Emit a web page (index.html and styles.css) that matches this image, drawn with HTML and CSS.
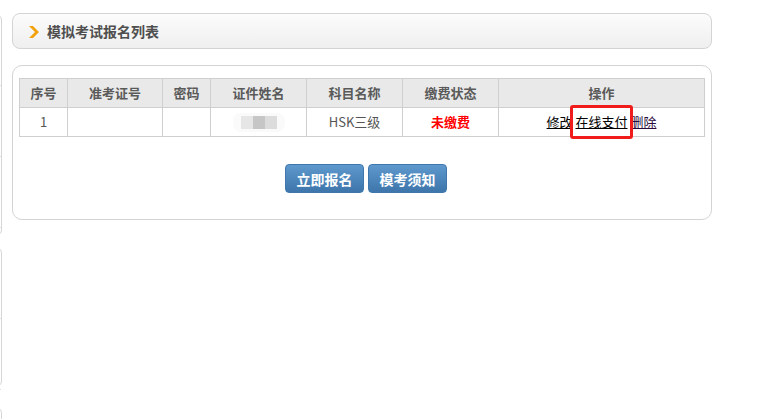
FILE: index.html
```html
<!DOCTYPE html>
<html lang="zh-CN">
<head>
<meta charset="utf-8">
<title>模拟考试报名列表</title>
<link rel="stylesheet" href="styles.css">
</head>
<body>
<div class="page">
  <aside class="side">
    <div class="side-box side-box-a">
      <div class="side-row"></div>
      <div class="side-row"></div>
      <div class="side-row"></div>
    </div>
    <div class="side-box side-box-b">
      <div class="side-row"></div>
      <div class="side-row"></div>
      <div class="side-row"></div>
    </div>
    <div class="side-box side-box-c"></div>
  </aside>

  <main class="content">
    <div class="title-bar">
      <svg class="title-icon" width="10" height="12" viewBox="0 0 10 12" aria-hidden="true">
        <polygon points="0,0 4,0 10,6 4,12 0,12 6,6" fill="#f2a20c"/>
      </svg>
      <h2 class="title-text">模拟考试报名列表</h2>
    </div>

    <div class="panel">
      <table class="grid">
        <colgroup>
          <col class="c-no">
          <col class="c-ticket">
          <col class="c-pwd">
          <col class="c-name">
          <col class="c-subject">
          <col class="c-pay">
          <col>
        </colgroup>
        <thead>
          <tr>
            <th>序号</th>
            <th>准考证号</th>
            <th>密码</th>
            <th>证件姓名</th>
            <th>科目名称</th>
            <th>缴费状态</th>
            <th>操作</th>
          </tr>
        </thead>
        <tbody>
          <tr>
            <td>1</td>
            <td></td>
            <td></td>
            <td><span class="masked"><i class="m1"></i><i class="m2"></i><i class="m3"></i></span></td>
            <td>HSK三级</td>
            <td class="unpaid">未缴费</td>
            <td class="ops">
              <a href="#" class="op">修改</a>
              <span class="mark"><a href="#" class="op">在线支付</a></span>
              <a href="#" class="op op-visited">删除</a>
            </td>
          </tr>
        </tbody>
      </table>

      <div class="actions">
        <button class="btn" type="button">立即报名</button>
        <button class="btn" type="button">模考须知</button>
      </div>
    </div>
  </main>
</div>
</body>
</html>
```

FILE: styles.css
```css
html, body {
  margin: 0;
  padding: 0;
  background: #fff;
}

body {
  font-family: "Noto Sans CJK SC", "Noto Sans", sans-serif;
  font-size: 13px;
  color: #555;
}

.page {
  display: flex;
  align-items: flex-start;
  height: 100vh;
  overflow: hidden;
}

/* left navigation column, mostly scrolled out of view */
.side {
  width: 3px;
  height: 100%;
  flex: none;
  overflow: hidden;
  display: flex;
  flex-direction: column;
}

.side-box {
  width: 40px;
  flex: none;
  margin-left: -38px;
  border: 1px solid #d6d6d6;
  border-radius: 0 6px 6px 0;
  box-sizing: border-box;
  background: #fff;
}

.side-box-a {
  margin-top: 14px;
  height: 222px;
}

.side-box-b {
  margin-top: 11px;
  height: 140px;
}

.side-box-c {
  margin-top: 20px;
  height: 60px;
}

.side-row {
  height: 70px;
  border-bottom: 1px solid #e2e2e2;
}

.content {
  margin-left: 9px;
  width: 700px;
  flex: none;
}

.title-bar {
  margin-top: 13px;
  height: 36px;
  box-sizing: border-box;
  border: 1px solid #d4d4d4;
  border-radius: 8px;
  background: linear-gradient(#fcfcfc, #efefef);
  display: flex;
  align-items: center;
  padding-left: 16px;
  gap: 8px;
}

.title-icon {
  display: block;
  flex: none;
  margin-top: 1px;
}

.title-text {
  margin: 0;
  font-size: 14px;
  font-weight: 700;
  color: #4f4f4f;
  line-height: 1;
}

.panel {
  margin-top: 16px;
  height: 155px;
  box-sizing: border-box;
  border: 1px solid #d4d4d4;
  border-radius: 10px;
  padding: 12px 6px 0;
}

.grid {
  width: 686px;
  border-collapse: collapse;
  table-layout: fixed;
}

.c-no { width: 48px; }
.c-ticket { width: 95px; }
.c-pwd { width: 48px; }
.c-name { width: 96px; }
.c-subject { width: 96px; }
.c-pay { width: 96px; }

.grid th,
.grid td {
  border: 1px solid #cfcfcf;
  height: 28px;
  padding: 0;
  text-align: center;
  vertical-align: middle;
  line-height: 16px;
}

.grid th {
  background: #e9e9e9;
  font-weight: 700;
  color: #5a5a5a;
}

.grid td {
  color: #555;
}

.masked {
  display: inline-flex;
  vertical-align: middle;
  padding: 3px 8px;
  background: #fafafa;
  border-radius: 8px;
}

.masked i {
  display: block;
  width: 12px;
  height: 13px;
}

.masked .m1 { background: #e6e6e6; }
.masked .m2 { background: #c6c6c6; }
.masked .m3 { background: #dcdcdc; }

.grid td.unpaid {
  color: #f00;
  font-weight: 700;
}

.ops {
  white-space: nowrap;
}

.op {
  color: #000;
  text-decoration: underline;
}

.op-visited {
  color: #2a0a3c;
}

/* highlight frame around the pay link */
.mark {
  position: relative;
  display: inline-block;
}

.mark::after {
  content: "";
  position: absolute;
  left: -5px;
  right: -5px;
  top: -9px;
  bottom: -9px;
  border: 3px solid #f01c1c;
  border-radius: 3px;
}

.actions {
  margin-top: 27px;
  display: flex;
  justify-content: center;
  gap: 4px;
  padding-left: 8px;
}

.btn {
  width: 79px;
  height: 29px;
  border: 1px solid #3f77ad;
  border-radius: 4px;
  background: linear-gradient(#5e98cc, #3e76ac);
  color: #fff;
  font-family: "Noto Sans CJK SC", sans-serif;
  font-size: 14px;
  font-weight: 700;
  padding: 0;
  cursor: pointer;
}
```
